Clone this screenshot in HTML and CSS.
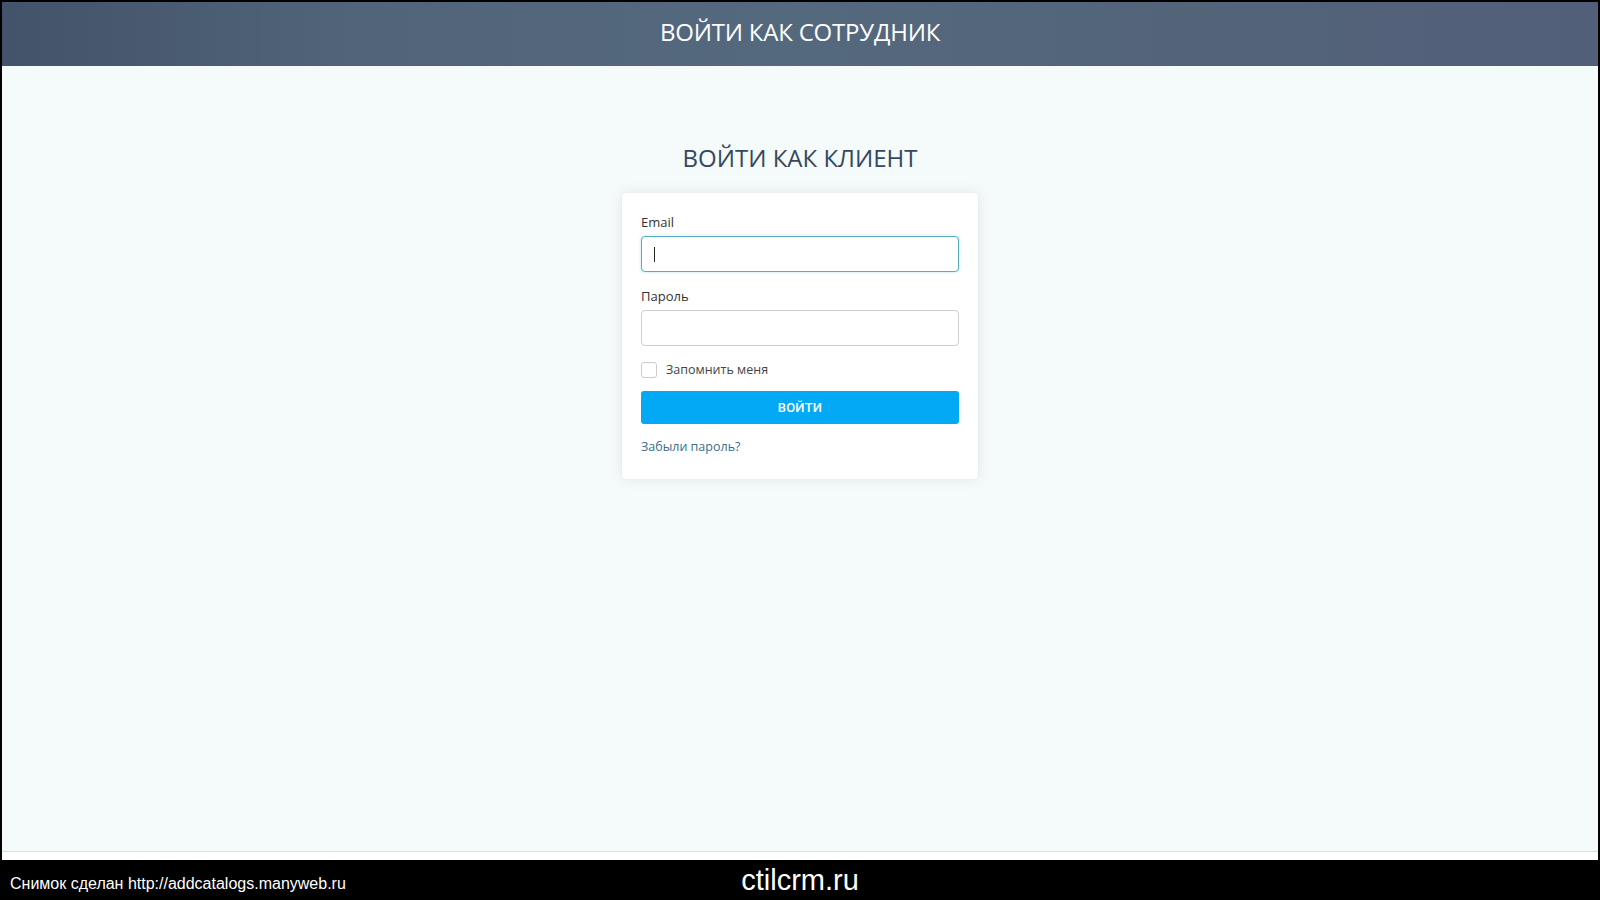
FILE: index.html
```html
<!DOCTYPE html>
<html lang="ru">
<head>
<meta charset="utf-8">
<title>Вход</title>
<link rel="stylesheet" href="styles.css">
</head>
<body>
<div class="screen">
  <header class="topbar">ВОЙТИ КАК СОТРУДНИК</header>
  <main class="main">
    <h1 class="title">ВОЙТИ КАК КЛИЕНТ</h1>
    <form class="card">
      <label class="label" for="email">Email</label>
      <div class="field">
        <input class="input input-focus" id="email" type="text">
        <span class="caret"></span>
      </div>
      <label class="label" for="pass">Пароль</label>
      <div class="field">
        <input class="input" id="pass" type="password">
      </div>
      <div class="remember">
        <input class="check" type="checkbox" id="rem">
        <label for="rem" class="remember-text">Запомнить меня</label>
      </div>
      <button class="btn" type="button">ВОЙТИ</button>
      <a class="forgot" href="#">Забыли пароль?</a>
    </form>
  </main>
  <div class="bottom-strip"></div>
</div>
<div class="caption">
  <span class="caption-left">Снимок сделан http://addcatalogs.manyweb.ru</span>
  <span class="caption-center">ctilcrm.ru</span>
</div>
</body>
</html>
```
FILE: styles.css
```css
* { box-sizing: border-box; }
html, body { margin: 0; padding: 0; }
body {
  width: 1600px;
  height: 900px;
  background: #000;
  display: flex;
  flex-direction: column;
  overflow: hidden;
  font-family: "Open Sans", "Liberation Sans", sans-serif;
}
.screen {
  flex: 1;
  margin: 2px 2px 0 2px;
  background: #f5fafb;
  display: flex;
  flex-direction: column;
}
.topbar {
  height: 64px;
  padding-bottom: 6px;
  display: flex;
  align-items: center;
  justify-content: center;
  color: #fff;
  font-size: 24px;
  font-weight: 500;
  letter-spacing: -0.2px;
  background: linear-gradient(90deg, #435369 0%, #51647a 22%, #54687e 50%, #536479 75%, #525f79 100%);
}
.main {
  flex: 1;
  display: flex;
  flex-direction: column;
  align-items: center;
  padding-top: 79px;
}
.title {
  margin: 0 0 21px;
  font-size: 24px;
  font-weight: 400;
  line-height: 26.4px;
  color: #34495e;
}
.card {
  width: 358px;
  background: #fff;
  border: 1px solid #e9eef0;
  border-radius: 3px;
  padding: 20px 19px 23px;
  box-shadow: 0 0 14px rgba(30, 60, 80, 0.07);
  display: flex;
  flex-direction: column;
}
.label {
  font-size: 13px;
  line-height: 18px;
  color: #333;
  margin-bottom: 5px;
}
.field {
  position: relative;
  margin-bottom: 15px;
}
.input {
  display: block;
  width: 100%;
  height: 36px;
  border: 1px solid #cfcfcf;
  border-radius: 4px;
  background: #fff;
  padding: 0 12px;
  font: inherit;
  outline: none;
}
.input-focus {
  border-color: #58aebf;
  box-shadow: 0 0 3px rgba(88, 190, 210, 0.45);
}
.caret {
  position: absolute;
  left: 13px;
  top: 11px;
  width: 1px;
  height: 15px;
  background: #222;
}
.remember {
  display: flex;
  align-items: center;
  height: 18px;
  margin-bottom: 12px;
}
.check {
  appearance: none;
  -webkit-appearance: none;
  margin: 0 9px 0 0;
  width: 16px;
  height: 16px;
  border: 1px solid #ccc;
  border-radius: 3px;
  background: #fff;
}
.remember-text {
  font-size: 12.5px;
  color: #444;
  line-height: 18px;
}
.btn {
  height: 33px;
  border: none;
  border-radius: 3px;
  background: #03a9f4;
  color: #fff;
  font-family: Roboto, "Open Sans", sans-serif;
  font-size: 13px;
  font-weight: 500;
  letter-spacing: 0.2px;
  margin-bottom: 14px;
}
.forgot {
  font-size: 12.5px;
  line-height: 18px;
  color: #3b6e8c;
  text-decoration: none;
}
.bottom-strip {
  height: 9px;
  background: #fff;
  border-top: 1px solid #dedede;
}
.caption {
  height: 40px;
  flex: none;
  position: relative;
  color: #fff;
  font-family: "Liberation Sans", Arial, sans-serif;
}
.caption-left {
  position: absolute;
  left: 10px;
  top: 14px;
  font-size: 16px;
  line-height: 20px;
}
.caption-center {
  position: absolute;
  left: 0;
  right: 0;
  top: 4px;
  text-align: center;
  font-size: 29px;
  line-height: 32px;
}
```
